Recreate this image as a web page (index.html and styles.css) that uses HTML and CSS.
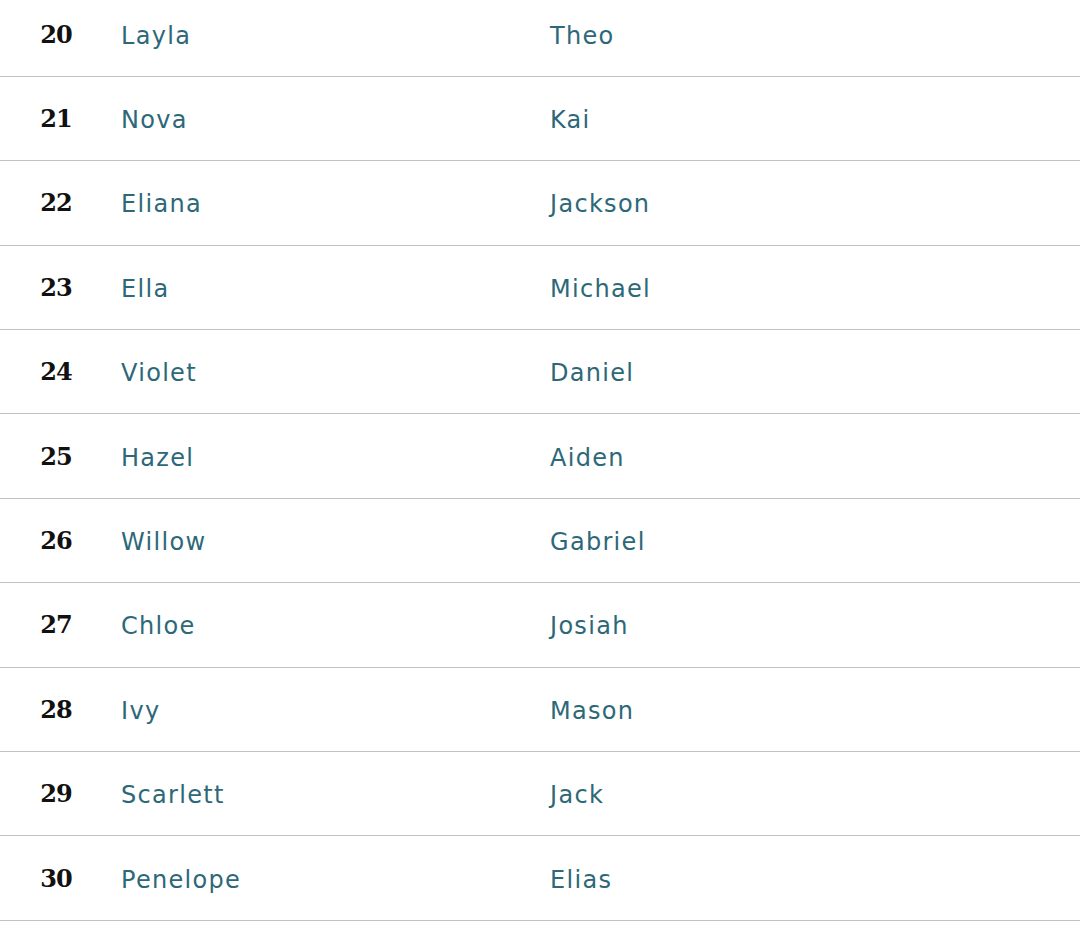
FILE: index.html
```html
<!DOCTYPE html>
<html>
<head>
<meta charset="utf-8">
<link rel="stylesheet" href="styles.css">
</head>
<body>
<div class="table">
  <div class="row"><div class="num">20</div><div class="name">Layla</div><div class="name">Theo</div></div>
  <div class="row"><div class="num">21</div><div class="name">Nova</div><div class="name">Kai</div></div>
  <div class="row"><div class="num">22</div><div class="name">Eliana</div><div class="name">Jackson</div></div>
  <div class="row"><div class="num">23</div><div class="name">Ella</div><div class="name">Michael</div></div>
  <div class="row"><div class="num">24</div><div class="name">Violet</div><div class="name">Daniel</div></div>
  <div class="row"><div class="num">25</div><div class="name">Hazel</div><div class="name">Aiden</div></div>
  <div class="row"><div class="num">26</div><div class="name">Willow</div><div class="name">Gabriel</div></div>
  <div class="row"><div class="num">27</div><div class="name">Chloe</div><div class="name">Josiah</div></div>
  <div class="row"><div class="num">28</div><div class="name">Ivy</div><div class="name">Mason</div></div>
  <div class="row"><div class="num">29</div><div class="name">Scarlett</div><div class="name">Jack</div></div>
  <div class="row"><div class="num">30</div><div class="name">Penelope</div><div class="name">Elias</div></div>
</div>
</body>
</html>
```

FILE: styles.css
```css
html, body {
  margin: 0;
  padding: 0;
  background: #ffffff;
}
.table {
  margin-top: -7.6px;
}
.row {
  display: grid;
  grid-template-columns: 112px 429px 1fr;
  align-items: center;
  height: 84.4px;
  box-sizing: border-box;
  border-bottom: 1.5px solid #c3c3be;
}
.num {
  text-align: center;
  font-family: "DejaVu Serif", serif;
  font-weight: bold;
  font-size: 24px;
  letter-spacing: -1px;
  color: #111111;
}
.name {
  padding-left: 9px;
  padding-top: 3px;
  font-family: "DejaVu Sans", sans-serif;
  font-size: 24px;
  letter-spacing: 1.3px;
  color: #2d6878;
}
```
